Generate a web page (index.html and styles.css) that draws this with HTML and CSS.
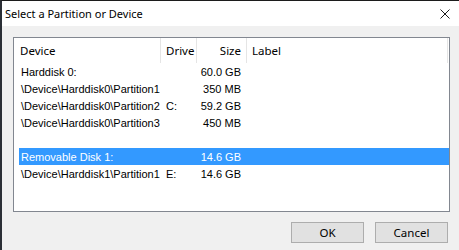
FILE: index.html
```html
<!DOCTYPE html>
<html>
<head>
<meta charset="utf-8">
<link rel="stylesheet" href="styles.css">
</head>
<body>
<div class="window">
  <div class="titlebar">
    <span class="title">Select a Partition or Device</span>
    <svg class="close" width="10" height="10" viewBox="0 0 10 10"><path d="M0.5 0.5 L9.5 9.5 M9.5 0.5 L0.5 9.5" stroke="#1a1a1a" stroke-width="1" fill="none"/></svg>
  </div>
  <div class="content">
    <div class="list">
      <div class="header">
        <div class="hcell hdevice">Device</div>
        <div class="hcell hdrive">Drive</div>
        <div class="hcell hsize">Size</div>
        <div class="hcell hlabel">Label</div>
      </div>
      <div class="rows">
        <div class="row"><span class="c-device">Harddisk 0:</span><span class="c-drive"></span><span class="c-size">60.0 GB</span><span class="c-label"></span></div>
        <div class="row"><span class="c-device">\Device\Harddisk0\Partition1</span><span class="c-drive"></span><span class="c-size">350 MB</span><span class="c-label"></span></div>
        <div class="row"><span class="c-device">\Device\Harddisk0\Partition2</span><span class="c-drive">C:</span><span class="c-size">59.2 GB</span><span class="c-label"></span></div>
        <div class="row"><span class="c-device">\Device\Harddisk0\Partition3</span><span class="c-drive"></span><span class="c-size">450 MB</span><span class="c-label"></span></div>
        <div class="row"><span class="c-device"></span><span class="c-drive"></span><span class="c-size"></span><span class="c-label"></span></div>
        <div class="row selected"><span class="c-device">Removable Disk 1:</span><span class="c-drive"></span><span class="c-size">14.6 GB</span><span class="c-label"></span></div>
        <div class="row"><span class="c-device">\Device\Harddisk1\Partition1</span><span class="c-drive">E:</span><span class="c-size">14.6 GB</span><span class="c-label"></span></div>
      </div>
    </div>
    <div class="buttons">
      <button class="btn">OK</button>
      <button class="btn">Cancel</button>
    </div>
  </div>
</div>
</body>
</html>
```
FILE: styles.css
```css
html, body {
  margin: 0;
  padding: 0;
}
body {
  width: 459px;
  height: 250px;
  overflow: hidden;
  background: #f0f0f0;
}
.window {
  box-sizing: border-box;
  width: 459px;
  height: 250px;
  border-top: 1px solid #1c1c1c;
  border-left: 2px solid #2b2f36;
  background: #f0f0f0;
  display: flex;
  flex-direction: column;
}
.titlebar {
  height: 25px;
  background: #ffffff;
  display: flex;
  align-items: center;
  justify-content: space-between;
  padding-left: 3px;
  padding-right: 9px;
}
.title {
  font-family: "Noto Sans", "Liberation Sans", sans-serif;
  font-size: 11px;
  color: #000;
}
.close {
  display: block;
}
.content {
  flex: 1;
  padding: 11px 9px 0 11px;
  display: flex;
  flex-direction: column;
}
.list {
  box-sizing: border-box;
  width: 437px;
  height: 175px;
  border: 1px solid #828790;
  background: #ffffff;
  font-family: "Liberation Sans", sans-serif;
  font-size: 11px;
  color: #000;
}
.header {
  display: grid;
  grid-template-columns: 147px 36px 50px 201px;
  height: 25px;
  font-family: "Noto Sans", "Liberation Sans", sans-serif;
  font-size: 11.5px;
}
.hcell {
  border-right: 1px solid #e5e5e5;
  display: flex;
  align-items: center;
}
.hdevice { padding-left: 6px; }
.hdrive { padding-left: 5px; }
.hsize { justify-content: flex-end; padding-right: 5px; }
.hlabel { padding-left: 5px; }
.rows {
  padding-left: 5px;
}
.row {
  display: grid;
  grid-template-columns: 142px 36px 50px 201px;
  height: 17px;
  align-items: center;
}
.row.selected {
  background: #3399ff;
  color: #ffffff;
}
.c-device { padding-left: 2px; white-space: nowrap; }
.c-drive { padding-left: 5px; }
.c-size { text-align: right; padding-right: 6px; }
.buttons {
  display: flex;
  justify-content: flex-end;
  gap: 11px;
  margin-top: 10px;
  padding-right: 2px;
}
.btn {
  box-sizing: border-box;
  width: 73px;
  height: 21px;
  border: 1px solid #adadad;
  background: #e1e1e1;
  font-family: "Noto Sans", "Liberation Sans", sans-serif;
  font-size: 11.5px;
  color: #000;
  padding: 0;
  margin: 0;
}
```
